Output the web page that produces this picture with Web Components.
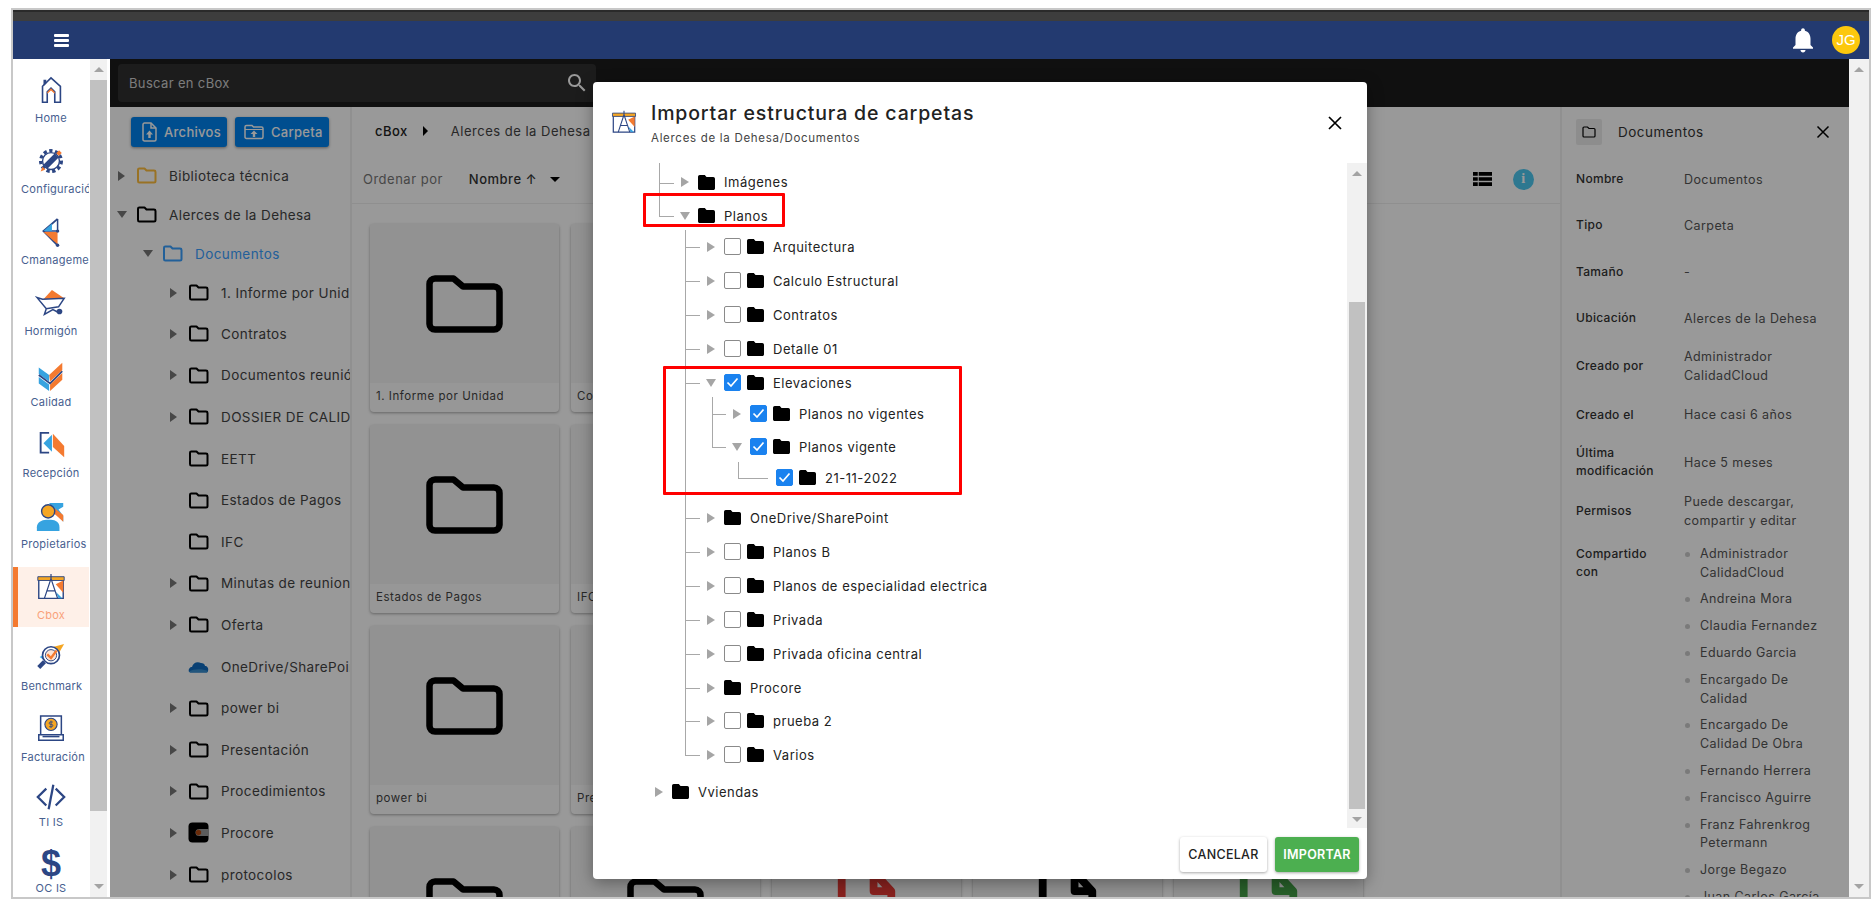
<!DOCTYPE html>
<html lang="es">
<head>
<meta charset="utf-8">
<title>cBox</title>
<style>
  html, body { margin: 0; background: #fff; overflow: hidden; }
  body { font-family: Inter, "Liberation Sans", sans-serif; }
  app-shell { margin: 8px 0 0 11px; }
</style>
</head>
<body>
<app-shell></app-shell>
<script>
const NAVY = '#2c4684', OR = '#f47a30', BL = '#36a3e0';
const ICONS = {
  home: `<path d="M7 29V12L16 3l10 9v17h-6V18l-4-4-4 4v11z" fill="none" stroke="${NAVY}" stroke-width="1.7"/><path d="M12 20v-2l4-4 4 4v2l-4-3.500z" fill="${OR}"/><path d="M8 5h3v4l-3 3z" fill="${NAVY}"/>`,
  config: `<circle cx="16" cy="16" r="11" fill="none" stroke="${NAVY}" stroke-width="3.500" stroke-dasharray="3.500 2.700"/><circle cx="16" cy="16" r="9" fill="#fff" stroke="${NAVY}" stroke-width="1.500"/><path d="M10 22L22 10" stroke="${NAVY}" stroke-width="6"/><path d="M23 9l3-3" stroke="${OR}" stroke-width="4"/><path d="M5 27l2-5 3 3z" fill="${OR}"/>`,
  cman: `<path d="M23 2L8 15l15 15" fill="none" stroke="${NAVY}" stroke-width="2"/><path d="M23 2v13H8" fill="none" stroke="${NAVY}" stroke-width="1.600"/><path d="M8 16h15v13z" fill="${OR}"/><path d="M8 15l9-8v8z" fill="${BL}"/><circle cx="23" cy="15" r="1.800" fill="${NAVY}"/><circle cx="23" cy="30" r="1.800" fill="${NAVY}"/>`,
  barrow: `<path d="M8 12L17 2l13 9z" fill="${OR}"/><path d="M1 10l6 2 23-1-6 9-13 2zM11 22l-2 6 9-5 6 3" fill="none" stroke="${NAVY}" stroke-width="1.600"/><circle cx="25" cy="25" r="3" fill="${NAVY}"/>`,
  check: `<path d="M14 17L28 4v8L15 24zM15 27l13-12v7L15 34z" fill="${OR}"/><path d="M3 9l11 8v7L3 16zM3 19l11 8v7L3 26z" fill="${BL}"/><path d="M3 17l12 9 13-13" fill="none" stroke="${NAVY}" stroke-width="1.800"/>`,
  recep: `<path d="M14 3H5v21h9" fill="none" stroke="${NAVY}" stroke-width="2"/><path d="M8 14l9-9v18z" fill="${BL}"/><path d="M18 4l12 13v12l-12-11z" fill="${OR}"/>`,
  owner: `<path d="M14 2h15v4l-5 3 5 7v6L19 10z" fill="${BL}"/><path d="M19 7l10 8v7L19 13z" fill="${OR}"/><circle cx="13" cy="11" r="7" fill="#f5a623" stroke="${NAVY}" stroke-width="1.500"/><path d="M1 32v-4c0-5 5-8 10-8h5c5 0 9 3 9 8v4z" fill="${BL}"/>`,
  cbox: `<path d="M3 8h26v20H3z" fill="#fff" stroke="${NAVY}" stroke-width="1.500"/><path d="M2 5h28v4H2z" fill="#f5a623" stroke="${NAVY}" stroke-width="1"/><path d="M21 13l8-4v13z" fill="${OR}"/><path d="M21 21l7 7h-4z" fill="${BL}"/><path d="M16 2v5M16 7L9 28M16 7l7 21M11 20h10" fill="none" stroke="${NAVY}" stroke-width="1.300"/>`,
  bench: `<path d="M19 4l11-3-7 12z" fill="#f5a623"/><path d="M4 15l10-6-4 10z" fill="${BL}"/><circle cx="16" cy="13" r="9" fill="#fff" stroke="${NAVY}" stroke-width="1.800"/><circle cx="16" cy="13" r="6" fill="#fde3d2" stroke="${NAVY}" stroke-width="1"/><path d="M12 12l4 4 6-8" fill="none" stroke="${OR}" stroke-width="2.500"/><path d="M9 20l-6 6" stroke="${NAVY}" stroke-width="4.500"/>`,
  bill: `<path d="M5 2h22v20H5zM3 22h26v6H3z" fill="#fff" stroke="${NAVY}" stroke-width="1.600"/><circle cx="16" cy="11" r="6.500" fill="#f5a623" stroke="${NAVY}" stroke-width="1.200"/><path d="M7 24h18" stroke="${NAVY}" stroke-width="1.600"/><path d="M18 8.500h-3a1.300 1.300 0 000 2.500h2a1.300 1.300 0 010 2.500h-3M16 7v8" fill="none" stroke="${NAVY}" stroke-width=".9"/>`,
  code: `<path d="M11 7l-9 9 9 9M21 7l9 9-9 9" fill="none" stroke="${NAVY}" stroke-width="2.400"/><path d="M18.500 3l-5 26" stroke="${NAVY}" stroke-width="2.400"/>`
};
const svg32 = (name, size = 32) => `<svg width="${size}" height="${size}" viewBox="0 0 32 34">${ICONS[name]}</svg>`;
const FOLDER_SOLID = 'M10 4H4c-1.100 0-1.990.9-1.990 2L2 18c0 1.100.9 2 2 2h16c1.100 0 2-.9 2-2V8c0-1.100-.9-2-2-2h-8l-2-2z';

function build(el, css, html) {
  if (!el.shadowRoot) el.attachShadow({ mode: 'open' });
  el.shadowRoot.innerHTML = `<style>${css}</style>${html}`;
}

class FakeScrollbar extends HTMLElement {
  connectedCallback() {
    const top = this.getAttribute('thumb-top');
    const h = this.getAttribute('thumb-height');
    build(this, `
      :host { display: flex; flex-direction: column; background: #f1f1f1; width: var(--w, 17px); flex: none; overflow: hidden; }
      .btn { height: 21px; flex: none; display: flex; align-items: center; justify-content: center; }
      .up { width: 0; height: 0; border: 5px solid transparent; border-top: 0; border-bottom: 5px solid #a3a3a3; }
      .down { width: 0; height: 0; border: 5px solid transparent; border-bottom: 0; border-top: 5px solid var(--down, #a3a3a3); }
      .track { flex: 1; }
      .thumb { background: #c1c1c1; margin: 0 var(--thumb-inset, 0); }
    `, `<div class="btn"><i class="up"></i></div>
        <div class="track">${h ? `<div class="thumb" style="margin-top:${top}px;height:${h}px"></div>` : ''}</div>
        <div class="btn"><i class="down"></i></div>`);
  }
}

class TopBar extends HTMLElement {
  connectedCallback() {
    build(this, `
      :host { display: flex; align-items: center; background: #233a70; height: 38px; padding-left: 41px; padding-right: 9px; }
      .burger { width: 15px; height: 13px; display: flex; flex-direction: column; justify-content: space-between; }
      .burger i { height: 3px; background: #fff; border-radius: 1px; }
      .bell { margin-left: auto; margin-right: 14px; display: flex; }
      .avatar { width: 28px; height: 28px; border-radius: 50%; background: #fcc80d; color: #fff; font: 15px/28px "Liberation Sans", sans-serif; text-align: center; }
    `, `<div class="burger"><i></i><i></i><i></i></div>
        <div class="bell"><svg width="30" height="30" viewBox="0 0 24 24" fill="#fff"><path d="M12 22c1.100 0 2-.9 2-2h-4c0 1.100.89 2 2 2zm6-6v-5c0-3.070-1.640-5.640-4.500-6.320V4c0-.83-.67-1.500-1.500-1.500s-1.500.67-1.500 1.500v.68C7.630 5.360 6 7.920 6 11v5l-2 2v1h16v-1l-2-2z"/></svg></div>
        <div class="avatar">JG</div>`);
  }
}

class NavItem extends HTMLElement {
  connectedCallback() {
    const icon = this.getAttribute('icon');
    const glyph = this.getAttribute('glyph');
    build(this, `
      :host { display: block; height: 60px; margin-bottom: 11px; padding-top: var(--top, 6px); box-sizing: border-box; overflow: hidden; position: relative; }
      :host([active]) { background: #fef0e8; }
      :host([active])::before { content: ""; position: absolute; left: 0; top: 0; bottom: 0; width: 5px; background: ${OR}; }
      .ic { height: 30px; display: flex; justify-content: center; align-items: center; }
      .glyph { font: bold 36px/30px "Liberation Sans", sans-serif; color: ${NAVY}; }
      .lb { margin: var(--lb, 5px) 0 0 8px; width: 60px; height: 14px; font-size: 11px; line-height: 14px; letter-spacing: .25px; color: #47608f; white-space: nowrap; text-align: center; }
      :host([active]) .lb { color: #f9a27a; }
    `, `<div class="ic">${glyph ? `<span class="glyph">${glyph}</span>` : svg32(icon)}</div><div class="lb"><slot></slot></div>`);
  }
}

class SideNav extends HTMLElement {
  connectedCallback() {
    const items = [['home','Home'],['config','Configuración'],['cman','Cmanagement'],['barrow','Hormigón'],['check','Calidad'],['recep','Recepción'],['owner','Propietarios'],['cbox','Cbox',1],['bench','Benchmark'],['bill','Facturación'],['code','TI IS',0,-6],['','OC IS',0,-5]];
    build(this, `
      :host { display: flex; width: 97px; flex: none; background: #fff; overflow: hidden; }
      .list { width: 76px; flex: none; padding-top: 11px; overflow: hidden; height: 827px; }
      fake-scrollbar { margin-left: 1px; }
    `, `<div class="list">${items.map(([ic, t, act, tight]) => `<nav-item ${ic ? `icon="${ic}"` : 'glyph="$"'} ${act ? 'active' : ''} ${tight ? `style="margin-top:${tight}px;--top:9px;--lb:2px"` : ''}>${t}</nav-item>`).join('')}</div>
        <fake-scrollbar thumb-top="0" thumb-height="731"></fake-scrollbar>`);
  }
}

class SearchBand extends HTMLElement {
  connectedCallback() {
    build(this, `
      :host { display: flex; align-items: center; height: 48px; background: #1c1c1c; padding-left: 8px; flex: none; }
      .box { width: 478px; height: 38px; background: #2f2f2f; border-radius: 4px; display: flex; align-items: center; justify-content: space-between; padding: 0 7px 0 11px; box-sizing: border-box; color: #cfcfcf; font-size: 13px; letter-spacing: .35px; }
    `, `<div class="box"><span>Buscar en cBox</span><svg width="24" height="24" viewBox="0 0 24 24" fill="#fff"><path d="M15.500 14h-.79l-.28-.27C15.410 12.590 16 11.110 16 9.500 16 5.910 13.090 3 9.500 3S3 5.910 3 9.500 5.910 16 9.500 16c1.610 0 3.090-.59 4.230-1.570l.27.28v.79l5 4.990L20.490 19l-4.990-5zm-6 0C7.010 14 5 11.990 5 9.500S7.010 5 9.500 5 14 7.010 14 9.500 11.990 14 9.500 14z"/></svg></div>`);
  }
}

class TreeItem extends HTMLElement {
  connectedCallback() {
    const arrow = this.getAttribute('arrow');
    const color = this.getAttribute('color') || '#000';
    const icon = this.getAttribute('icon') || 'folder';
    let ic = `<svg width="21" height="17" viewBox="0 0 21 17"><path d="M2 2.800C2 2 2.500 1.500 3.300 1.500H8.500L10.500 3.500H18C18.800 3.500 19.500 4.100 19.500 4.900V14C19.500 14.900 18.800 15.500 18 15.500H3.300C2.500 15.500 2 14.900 2 14z" fill="none" stroke="${color}" stroke-width="2" stroke-linejoin="round"/></svg>`;
    if (icon === 'cloud') ic = `<svg width="21" height="17" viewBox="0 0 21 17"><path d="M1 14c-1-3 1-5 3-5 1-4 5-6 9-4 2 0 4 1 4 3 2 0 4 2 3 5-.3 1-1 1.500-2 1.500H3c-1 0-1.700-.5-2-.5z" fill="#0f6cc0"/><path d="M1 13.500c5-3 13-3 19-.5-.3 1-1 1.500-2 1.500H3c-1 0-1.700-.5-2-1z" fill="#3a8fd0"/></svg>`;
    if (icon === 'procore') ic = `<svg width="21" height="21" viewBox="0 0 21 21"><rect x="0.500" y="0.500" width="20" height="20" rx="4" fill="#000"/><path d="M21 7h-10a3.500 3.500 0 000 7h10z" fill="#999"/><path d="M10.500 7.500l2.600 1.500v3l-2.600 1.500-2.600-1.500V9z" fill="#b34a12"/></svg>`;
    build(this, `
      :host { display: flex; align-items: center; height: var(--h, 41.6px); white-space: nowrap; font-size: 13.500px; letter-spacing: .4px; color: #444; }
      :host([selected]) { color: #3aa0ff; }
      .ar { width: 9px; height: 12px; flex: none; display: flex; align-items: center; justify-content: center; }
      .right { width: 0; height: 0; border: 5px solid transparent; border-right: 0; border-left: 7px solid #777; }
      .down { width: 0; height: 0; border: 5.500px solid transparent; border-bottom: 0; border-top: 7px solid #777; }
      .ic { display: flex; margin: 0 12px 0 10px; }
    `, `<div class="ar">${arrow ? `<i class="${arrow}"></i>` : ''}</div><div class="ic">${ic}</div><span><slot></slot></span>`);
  }
}

class FolderPanel extends HTMLElement {
  connectedCallback() {
    const rows = [
      [7,'right','Biblioteca técnica',{color:'#ffbe3c'}],
      [7,'down','Alerces de la Dehesa',{}],
      [33,'down','Documentos',{color:'#3aa0ff',selected:1}],
      [59,'right','1. Informe por Unidad',{}],
      [59,'right','Contratos',{m:1}],
      [59,'right','Documentos reunión',{}],[59,'right','DOSSIER DE CALIDAD',{}],[59,'','EETT',{}],[59,'','Estados de Pagos',{}],[59,'','IFC',{}],
      [59,'right','Minutas de reunion',{}],[59,'right','Oferta',{}],[59,'','OneDrive/SharePoint',{icon:'cloud'}],[59,'right','power bi',{}],
      [59,'right','Presentación',{}],[59,'right','Procedimientos',{}],[59,'right','Procore',{icon:'procore'}],[59,'right','protocolos',{}]
    ];
    build(this, `
      :host { display: block; width: 242px; flex: none; box-sizing: border-box; background: #fff; border-right: 2px solid #f0f0f0; overflow: hidden; }
      .btns { display: flex; gap: 8px; padding: 10px 0 9px 21px; }
      .btn { height: 30px; box-sizing: border-box; background: #0083ef; color: #fff; border-radius: 3px; display: flex; align-items: center; gap: 7px; font-size: 13px; font-weight: 500; letter-spacing: .3px; box-shadow: 0 1px 3px rgba(0,0,0,.4); }
      .a { width: 96px; padding-left: 11px; }
      .b { width: 94px; padding-left: 9px; }
      tree-item:nth-of-type(-n+4) { --h: 39px; }
      svg { flex: none; }
    `, `<div class="btns">
          <div class="btn a"><svg width="15" height="20" viewBox="0 0 15 20"><path d="M1 2.500C1 1.600 1.600 1 2.500 1H9l5 5v11.500c0 .9-.6 1.500-1.500 1.500h-10C1.600 19 1 18.400 1 17.500z" fill="none" stroke="#fff" stroke-width="1.500"/><path d="M9 1v5h5" fill="none" stroke="#fff" stroke-width="1.500"/><path d="M7.500 8.500l-3.500 4h2.300V16h2.400v-3.500H11z" fill="#fff"/></svg>Archivos</div>
          <div class="btn b"><svg width="20" height="16" viewBox="0 0 20 16"><path d="M1 3c0-1 .6-1.500 1.500-1.500H8L9.500 3h8c.9 0 1.500.6 1.500 1.500V13c0 .9-.6 1.500-1.500 1.500h-15C1.600 14.500 1 13.900 1 13z" fill="none" stroke="#fff" stroke-width="1.500"/><path d="M1 5.500h18" stroke="#fff" stroke-width="1"/><path d="M10 6.500l-3.500 3.500h2.300v3h2.400v-3H13.500z" fill="#fff"/></svg>Carpeta</div>
        </div>
        ${rows.map(([x, ar, t, o]) => `<tree-item style="padding-left:${x}px${o.m ? ';margin-top:1px' : ''}" ${ar ? `arrow="${ar}"` : ''} ${o.color ? `color="${o.color}"` : ''} ${o.icon ? `icon="${o.icon}"` : ''} ${o.selected ? 'selected' : ''}>${t}</tree-item>`).join('')}`);
  }
}

class FileCard extends HTMLElement {
  connectedCallback() {
    const color = this.getAttribute('color') || '#000';
    const art = this.getAttribute('kind') === 'file'
      ? `<svg style="margin-top:-6px" width="85" height="85" viewBox="0 0 24 24"><path d="M14 3.100H6.500A1.500 1.500 0 005 4.600v15.300a1.500 1.500 0 001.500 1.500h11a1.500 1.500 0 001.500-1.500V8.500zM14 3.100v5.400h5" fill="none" stroke="${color}" stroke-width="2.200" stroke-linejoin="round"/></svg>`
      : `<svg width="77" height="58" viewBox="0 0 77 58"><path d="M3.500 9A5.500 5.500 0 019 3.500H27.500L37 11.500H68A5.500 5.500 0 0173.500 17V49A5.500 5.500 0 0168 54.500H9A5.500 5.500 0 013.500 49z" fill="none" stroke="#000" stroke-width="6.500" stroke-linejoin="round"/></svg>`;
    build(this, `
      :host { display: block; width: 189px; height: 188px; border-radius: 4px; background: #fcfcfc; box-shadow: 0 1px 3px rgba(0,0,0,.35); overflow: hidden; }
      .img { height: 159px; background: #f4f4f4; display: flex; align-items: center; justify-content: center; }
      .lb { height: 29px; line-height: 27px; padding-left: 6px; font-size: 11.500px; letter-spacing: .55px; color: #444; white-space: nowrap; }
    `, `<div class="img">${art}</div><div class="lb"><slot></slot></div>`);
  }
}

class FileBrowser extends HTMLElement {
  connectedCallback() {
    const cell = (t) => `<file-card>${t || ''}</file-card>`;
    const filler = cell() + cell() + cell();
    build(this, `
      :host { display: block; flex: 1; min-width: 0; background: #fff; overflow: hidden; font-size: 13px; letter-spacing: .5px; color: #444; }
      .crumb { height: 48px; display: flex; align-items: center; padding-left: 23px; white-space: nowrap; }
      .crumb b { font-weight: 500; color: #222; }
      .crumb i { width: 0; height: 0; border: 5px solid transparent; border-right: 0; border-left: 5px solid #000; margin: 0 23px 0 15px; }
      .sort { height: 48px; display: flex; align-items: center; padding-left: 11px; border-bottom: 1px solid #eee; box-sizing: content-box; color: #777; }
      .sort b { font-weight: 500; color: #333; margin-left: 26px; }
      .sort .car { width: 0; height: 0; border: 5px solid transparent; border-bottom: 0; border-top: 5px solid #000; margin-left: 13px; }
      .tools { margin-left: auto; display: flex; align-items: center; gap: 21px; padding-right: 26px; }
      .tools span { width: 21px; height: 21px; border-radius: 50%; background: #4ec8f1; color: #fff; display: flex; align-items: center; justify-content: center; font: bold 14px "Liberation Serif", serif; }
      .grid { display: grid; grid-template-columns: repeat(5, 189px); grid-auto-rows: 188px; column-gap: 12px; row-gap: 13px; padding: 20px 0 0 18px; }
    `, `<div class="crumb"><b>cBox</b><i></i><span>Alerces de la Dehesa</span></div>
        <div class="sort"><span>Ordenar por</span><b>Nombre ↑</b><span class="car"></span>
          <div class="tools"><svg width="19" height="14" viewBox="0 0 20 15" preserveAspectRatio="none"><path d="M0 0h5v4H0zM6 0h14v4H6zM0 5.500h5v4H0zM6 5.500h14v4H6zM0 11h5v4H0zM6 11h14v4H6z" fill="#000"/></svg><span>i</span></div></div>
        <div class="grid">
          ${cell('1. Informe por Unidad')}${cell('Contratos')}${filler}
          ${cell('Estados de Pagos')}${cell('IFC')}${filler}
          ${cell('power bi')}${cell('Presentación')}${filler}
          ${cell()}${cell()}
          <file-card kind="file" color="#e53935"></file-card>
          <file-card kind="file" color="#000"></file-card>
          <file-card kind="file" color="#43a047"></file-card>
        </div>`);
  }
}

class DetailPanel extends HTMLElement {
  connectedCallback() {
    const rows = [
      ['Nombre','Documentos',46],['Tipo','Carpeta',46],['Tamaño','-',47],['Ubicación','Alerces de la Dehesa',46],
      ['Creado por','Administrador CalidadCloud',50],['Creado el','Hace casi 6 años',47],['Última modificación','Hace 5 meses',48],
      ['Permisos','Puede descargar, compartir y editar',50]
    ];
    const shared = ['Administrador CalidadCloud','Andreina Mora','Claudia Fernandez','Eduardo Garcia','Encargado De Calidad','Encargado De Calidad De Obra','Fernando Herrera','Francisco Aguirre','Franz Fahrenkrog Petermann','Jorge Begazo','Juan Carlos García'];
    build(this, `
      :host { display: block; width: 289px; flex: none; box-sizing: border-box; background: #fff; border-left: 2px solid #f0f0f0; padding: 12px 0 0 14px; overflow: hidden; font-size: 12.500px; letter-spacing: .42px; color: #555; }
      .head { display: flex; align-items: center; height: 26px; margin-bottom: 11px; font-size: 13.500px; letter-spacing: .5px; color: #333; }
      .sq { width: 26px; height: 26px; background: #ececec; border-radius: 2px; display: flex; align-items: center; justify-content: center; margin-right: 16px; }
      .x { margin-left: auto; margin-right: 19px; display: flex; }
      .row { display: grid; grid-template-columns: 108px 146px; align-items: center; line-height: 19px; }
      .k { font-weight: 500; font-size: 12px; letter-spacing: .3px; color: #333; line-height: 18px; }
      .row.top { align-items: start; margin-top: 9px; }
      ul { margin: 0; padding: 0; list-style: none; }
      li { position: relative; padding-left: 16px; margin-bottom: 8.400px; line-height: 18.500px; }
      li::before { content: ""; position: absolute; left: 1px; top: 7px; width: 5px; height: 5px; border-radius: 50%; background: #ccc; }
    `, `<div class="head"><div class="sq"><svg width="14" height="12" viewBox="0 0 14 12"><path d="M1 2c0-.6.4-1 1-1h3.500L7 2.500h5c.6 0 1 .4 1 1V10c0 .6-.4 1-1 1H2c-.6 0-1-.4-1-1z" fill="none" stroke="#000" stroke-width="1.200"/></svg></div><span>Documentos</span><div class="x"><svg width="14" height="14" viewBox="0 0 14 14"><path d="M1.500 1.500l11 11M12.500 1.500l-11 11" stroke="#000" stroke-width="1.500"/></svg></div></div>
        ${rows.map(([k, v, h]) => `<div class="row" style="height:${h}px"><div class="k">${k}</div><div>${v}</div></div>`).join('')}
        <div class="row top"><div class="k">Compartido<br>con</div><ul>${shared.map((s) => `<li>${s}</li>`).join('')}</ul></div>`);
  }
}

class DialogRow extends HTMLElement {
  connectedCallback() {
    const a = this.getAttribute('arrow');
    const c = this.getAttribute('check');
    build(this, `
      :host { display: flex; align-items: center; height: 30px; white-space: nowrap; font-size: 13px; letter-spacing: .52px; color: #222; }
      .ar { width: 12px; flex: none; display: flex; justify-content: center; margin-right: 7px; }
      .right { width: 0; height: 0; border: 5.500px solid transparent; border-right: 0; border-left: 8px solid #a5a5a5; }
      .down { width: 0; height: 0; border: 5.500px solid transparent; border-bottom: 0; border-top: 8px solid #a5a5a5; }
      .cb { width: 17px; height: 17px; box-sizing: border-box; border: 1.500px solid #8a8a8a; border-radius: 2px; margin-right: 6px; flex: none; background: #fff; }
      .cb.on { background: #1a82ef; border-color: #1a82ef; display: flex; align-items: center; justify-content: center; }
      svg.f { flex: none; margin-right: 9px; }
    `, `<div class="ar">${a ? `<i class="${a}"></i>` : ''}</div>
        ${c ? `<div class="cb ${c === 'on' ? 'on' : ''}">${c === 'on' ? '<svg width="13" height="11" viewBox="0 0 13 11"><path d="M1.500 5.500L5 9l6.500-7.500" fill="none" stroke="#fff" stroke-width="1.700"/></svg>' : ''}</div>` : ''}
        <svg class="f" width="17" height="15" viewBox="2 4 20 16" preserveAspectRatio="none"><path d="${FOLDER_SOLID}" fill="#000"/></svg>
        <span><slot></slot></span>`);
  }
}

class ImportDialog extends HTMLElement {
  connectedCallback() {
    // [indent, flecha, checkbox, separacion arriba, texto]
    const rows = [
      [86,'right','',4,'Imágenes'],[86,'down','',3.5,'Planos'],
      [112,'right','off',1,'Arquitectura'],[112,'right','off',4,'Calculo Estructural'],[112,'right','off',4,'Contratos'],[112,'right','off',4,'Detalle 01'],
      [112,'down','on',4,'Elevaciones'],[138,'right','on',1,'Planos no vigentes'],[138,'down','on',3,'Planos vigente'],[164,'','on',1,'21-11-2022'],
      [112,'right','',10,'OneDrive/SharePoint'],[112,'right','off',4,'Planos B'],[112,'right','off',4,'Planos de especialidad electrica'],[112,'right','off',4,'Privada'],
      [112,'right','off',4,'Privada oficina central'],[112,'right','',4,'Procore'],[112,'right','off',3,'prueba 2'],[112,'right','off',4,'Varios'],[60,'right','',7,'Vviendas']
    ];
    const lines = [[66,0,1,53],[66,20,15,1],[66,53,15,1],[92,67,1,525],
      ...[84,118,152,186,220,355,389,423,457,491,525,558,592].map((y) => [92,y,15,1]),
      [119,234,1,50],[119,251,14,1],[119,284,14,1],[145,299,1,16],[145,315,30,1]];
    build(this, `
      :host { position: absolute; left: 580px; top: 72px; width: 774px; height: 797px; background: #fff; border-radius: 4px; box-shadow: 0 4px 16px rgba(0,0,0,.35); display: flex; flex-direction: column; overflow: hidden; }
      .hd { height: 81px; flex: none; display: flex; position: relative; box-sizing: border-box; padding: 18px 0 0 17px; }
      .hd .ic { margin-right: 13px; padding-top: 9px; }
      h1 { margin: 0; font-size: 19.500px; line-height: 26px; font-weight: 500; color: #222; letter-spacing: .85px; white-space: nowrap; }
      .sub { font-size: 11.500px; line-height: 16px; margin-top: 4px; color: #444; letter-spacing: .7px; }
      .x { margin: 16px 0 0 auto; padding-right: 25px; display: flex; }
      .body { flex: 1; display: flex; min-height: 0; }
      .tree { flex: 1; position: relative; overflow: hidden; }
      .ln { position: absolute; background: #a8a8a8; }
      fake-scrollbar { --w: 20px; --thumb-inset: 2px; }
      .ft { height: 51px; flex: none; box-sizing: border-box; display: flex; justify-content: flex-end; gap: 8px; padding: 9px 8px 0 0; }
      .ft div { height: 35px; border-radius: 3px; display: flex; align-items: center; justify-content: center; font-size: 12.500px; font-weight: 500; letter-spacing: .3px; box-shadow: 0 1px 3px rgba(0,0,0,.35); }
      .c { width: 87px; background: #fff; color: #222; }
      .i { width: 84px; background: #4caf50; color: #fff; font-weight: 600 !important; }
      .red { position: absolute; border: 3px solid #f00; box-sizing: border-box; border-radius: 1px; }
    `, `<div class="hd"><div class="ic">${svg32('cbox', 28)}</div>
          <div><h1>Importar estructura de carpetas</h1><div class="sub">Alerces de la Dehesa/Documentos</div></div>
          <div class="x"><svg width="14" height="14" viewBox="0 0 14 14"><path d="M1 1l12 12M13 1L1 13" stroke="#000" stroke-width="1.700"/></svg></div></div>
        <div class="body"><div class="tree">
          ${lines.map(([x, y, w, h]) => `<i class="ln" style="left:${x}px;top:${y}px;width:${w}px;height:${h}px"></i>`).join('')}
          ${rows.map(([x, ar, ck, gap, t]) => `<dialog-row style="padding-left:${x}px;margin-top:${gap}px" ${ar ? `arrow="${ar}"` : ''} ${ck ? `check="${ck}"` : ''}>${t}</dialog-row>`).join('')}
          <div class="red" style="left:50px;top:30px;width:142px;height:34px"></div>
          <div class="red" style="left:70px;top:203px;width:299px;height:129px"></div>
        </div><fake-scrollbar thumb-top="118" thumb-height="507"></fake-scrollbar></div>
        <div class="ft"><div class="c">CANCELAR</div><div class="i">IMPORTAR</div></div>`);
  }
}

class AppShell extends HTMLElement {
  connectedCallback() {
    build(this, `
      :host { display: block; position: relative; box-sizing: border-box; width: 1860px; height: 891px; border: 2px solid #c8c8c8; overflow: hidden; font-family: Inter, "Liberation Sans", sans-serif; background: #fff; }
      .strip { height: 11px; background: #3d3d3d; border-top: 2px solid #2a2a2a; box-sizing: border-box; }
      .row { display: flex; height: 838px; }
      main { width: 1739px; flex: none; position: relative; display: flex; flex-direction: column; overflow: hidden; }
      .cols { flex: 1; display: flex; min-height: 0; }
      .scrim { position: absolute; inset: 0; background: rgba(0,0,0,.4); }
      .pg { --w: 20px; }
    `, `<div class="strip"></div><top-bar></top-bar>
        <div class="row"><side-nav></side-nav>
          <main><search-band></search-band>
            <div class="cols"><folder-panel></folder-panel><file-browser></file-browser><detail-panel></detail-panel></div>
            <div class="scrim"></div></main>
          <fake-scrollbar class="pg"></fake-scrollbar></div>
        <import-dialog></import-dialog>`);
  }
}

customElements.define('fake-scrollbar', FakeScrollbar);
customElements.define('top-bar', TopBar);
customElements.define('nav-item', NavItem);
customElements.define('side-nav', SideNav);
customElements.define('search-band', SearchBand);
customElements.define('tree-item', TreeItem);
customElements.define('folder-panel', FolderPanel);
customElements.define('file-card', FileCard);
customElements.define('file-browser', FileBrowser);
customElements.define('detail-panel', DetailPanel);
customElements.define('dialog-row', DialogRow);
customElements.define('import-dialog', ImportDialog);
customElements.define('app-shell', AppShell);
</script>
</body>
</html>
